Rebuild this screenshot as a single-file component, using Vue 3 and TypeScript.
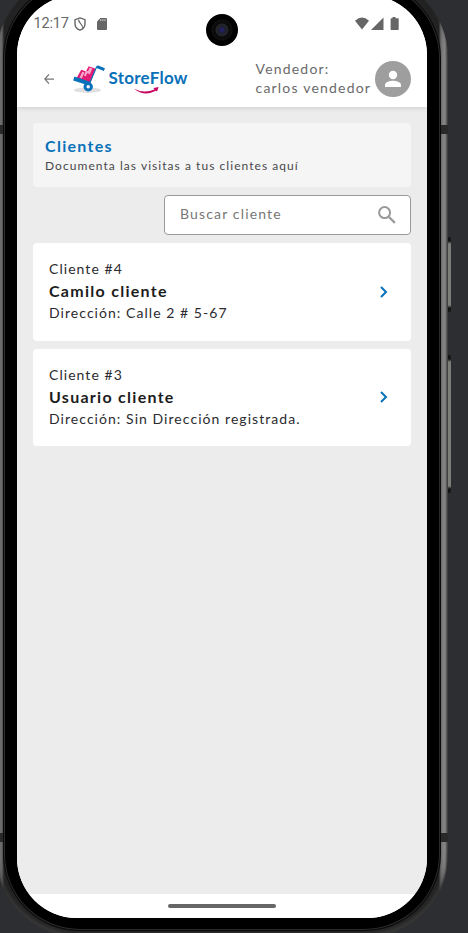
<script setup lang="ts">
interface Client {
  id: number
  name: string
  address: string
}

const seller = 'carlos vendedor'
const clients: Client[] = [
  { id: 4, name: 'Camilo cliente', address: 'Calle 2 # 5-67' },
  { id: 3, name: 'Usuario cliente', address: 'Sin Dirección registrada.' },
]
</script>

<template>
  <div class="stage">
    <span class="side-key power"></span>
    <span class="side-key volume"></span>
    <div class="phone">
      <span class="band band-top"></span>
      <span class="band band-low"></span>
      <div class="bezel">
        <div class="screen">
          <div class="status">
            <span class="clock">12:17</span>
            <svg class="shield" width="12" height="14" viewBox="0 0 12 14" fill="none" stroke="#666" stroke-width="1.4">
              <path d="M6 .9 11 2.7V6.5C11 9.8 9 12.2 6 13.2 3 12.2 1 9.8 1 6.5V2.7Z" />
              <path d="M4.6 2.5C4.4 6.2 8.6 6.4 8.7 10.8" stroke-width="1.2" />
            </svg>
            <svg class="sd" width="10" height="12" viewBox="0 0 10 12">
              <path d="M3.4 0H9q1 0 1 1v10q0 1-1 1H1q-1 0-1-1V3.5Z" fill="#666" />
              <path d="M3.8 1.2v1.8M5.9 1.2v1.8M8 1.2v1.8" stroke="#ddd" stroke-width=".9" />
            </svg>
            <svg class="signals" width="44" height="14" viewBox="0 0 44 14" fill="#666">
              <path d="M0 3.7Q7-2.5 14 3.7L7 12.5Z" />
              <path d="M28.5.5V13H16Z" />
              <path d="M37.5 0h3v1.2H43q.7 0 .7.8v10.2q0 .8-.7.8h-6.6q-.8 0-.8-.8V2q0-.8.8-.8h1.1Z" />
            </svg>
          </div>

          <header class="appbar">
            <svg class="back" width="10" height="10" viewBox="0 0 10 10" fill="none" stroke="#777" stroke-width="1.25">
              <path d="M10 5H.9M5 .4.8 5 5 9.6" />
            </svg>
            <div class="brand">
              <svg class="cart" width="33" height="29" viewBox="0 0 33 29">
                <ellipse cx="14.5" cy="25.2" rx="13.5" ry="2.7" fill="#e0e0e0" />
                <path d="m8.2 4.7 5 1.7-3.7 9-6-2.1Z" fill="#e31b76" />
                <path d="m15.7 1.3 7 2.5-5.2 14-9-3.2Z" fill="#e31b76" />
                <path d="m9.2 6.8 2.2.7-2.6 6-2.2-.7ZM16.6 2.6l2.8 1-2.5 5.6-2.7-.9ZM13 5.5l2 .7-2.2 5-1.9-.6Z" fill="#f6a5ca" />
                <path d="m16.5 18.5 7.4-17.2" fill="none" stroke="#0871b9" stroke-width="1.1" />
                <path d="m.8 13.5 15.6 5.2" stroke="#0871b9" stroke-width="4" />
                <path d="m24 1.6 7.4 3" stroke="#0871b9" stroke-width="3" />
                <circle cx="15.2" cy="21.8" r="3.2" fill="#fff" stroke="#0871b9" stroke-width="3" />
              </svg>
              <div class="wordmark">
                <span>StoreFlow</span>
                <svg class="swoosh" width="25" height="7" viewBox="0 0 25 7">
                  <path d="M0 1.8Q10 7 20.5 2.6L19.5 1l5.2-1L23 4.6l-1.1-.8Q10 10 0 1.8Z" fill="#c80862" />
                </svg>
              </div>
            </div>
            <div class="seller">
              <div>Vendedor:</div>
              <div>{{ seller }}</div>
            </div>
            <svg class="avatar" width="36" height="36" viewBox="0 0 36 36">
              <circle cx="18" cy="18" r="18" fill="#9e9e9e" />
              <circle cx="18" cy="14" r="4.2" fill="#fff" />
              <path d="M10 26v-2.2c0-2.7 5.3-4 8-4s8 1.3 8 4V26Z" fill="#fff" />
            </svg>
          </header>

          <main class="content">
            <section class="intro">
              <h1>Clientes</h1>
              <p>Documenta las visitas a tus clientes aquí</p>
            </section>
            <div class="search">
              <span>Buscar cliente</span>
              <svg width="18" height="18" viewBox="0 0 18 18" fill="none" stroke="#999" stroke-width="2">
                <circle cx="6.6" cy="6.6" r="5.5" />
                <path d="m10.7 10.7 6.2 6.2" stroke-width="2.2" />
              </svg>
            </div>
            <article v-for="client in clients" :key="client.id" class="card">
              <div class="details">
                <div class="number">Cliente #{{ client.id }}</div>
                <div class="name">{{ client.name }}</div>
                <div class="address">Dirección: {{ client.address }}</div>
              </div>
              <svg width="8" height="12" viewBox="0 0 8 12" fill="none" stroke="#0871b9" stroke-width="2">
                <path d="m1 1 5 5-5 5" />
              </svg>
            </article>
          </main>
          <footer class="navbar"><span></span></footer>
          <span class="camera"></span>
        </div>
      </div>
    </div>
  </div>
</template>

<style>
body {
  background: #2d2e32;
}
</style>

<style scoped>
.stage {
  position: relative;
  width: 468px;
  height: 933px;
  overflow: hidden;
  background: #2d2e32;
  font-family: Lato, "Noto Sans", sans-serif;
  color: #2b2b2f;
}
.stage * {
  box-sizing: border-box;
}
.phone {
  position: relative;
  width: 452px;
  height: 964px;
  margin: -26px 0 0 -4px;
  padding: 8px;
  border-radius: 84px;
  background: linear-gradient(90deg, #444 0, #707070 4px, #666 6px, #222 8px, #222 443px, #555 444px, #777 446px, #8c8c8c 449px, #5b5b5b 451px, #333 452px);
  box-shadow: inset 0 -1px 1px #303030, inset 0 -4px 4px #3c3c3c;
}
.bezel {
  position: relative;
  height: 948px;
  padding: 13px;
  border-radius: 76px;
  background: #000;
  box-shadow: inset 0 0 0 1px #2c2c2c, 0 0 0 1px #0a0a0a;
}
.screen {
  position: relative;
  display: flex;
  flex-direction: column;
  width: 410px;
  height: 923px;
  border-radius: 60px;
  overflow: hidden;
  background: #fff;
}
.side-key {
  position: absolute;
  left: 447px;
  width: 4px;
  border-radius: 0 2px 2px 0;
  background: linear-gradient(#141414 0, #141414 4px, #7c7c79 7px, #7c7c79 calc(100% - 7px), #141414 calc(100% - 4px));
}
.power {
  top: 237px;
  height: 75px;
}
.volume {
  top: 355px;
  height: 138px;
}
.band {
  position: absolute;
  left: 0;
  width: 452px;
  height: 9px;
  background: #292929;
}
.band-top {
  top: 151px;
}
.band-low {
  top: 859px;
}
.status {
  position: relative;
  z-index: 1;
  display: flex;
  align-items: center;
  flex: none;
  height: 56px;
  padding: 2px 28px 0 16.5px;
  font: 14.5px/20px Roboto, sans-serif;
  color: #666;
  background: #fff;
}
.clock {
  width: 36px;
  letter-spacing: -0.15px;
}
.shield {
  margin-left: 4px;
}
.sd {
  margin-left: 11px;
}
.signals {
  margin-left: auto;
}
.appbar {
  display: flex;
  align-items: center;
  flex: none;
  position: relative;
  height: 56px;
  padding: 0 16px 0 27px;
  background: #fff;
  box-shadow: 0 1px 5px #0002;
}
.brand {
  display: flex;
  margin-left: 19px;
  padding-top: 1px;
}
.wordmark {
  position: relative;
  margin-left: 2.5px;
  padding-top: 2px;
  font: 700 17px/22px Lato, sans-serif;
  color: #0871b9;
  letter-spacing: 0.25px;
}
.swoosh {
  position: absolute;
  left: 25px;
  top: 22px;
}
.seller {
  margin-left: auto;
  width: 119.5px;
  padding-bottom: 2px;
  font-size: 14px;
  line-height: 19px;
  letter-spacing: 1.2px;
  color: #6a6a6a;
  white-space: nowrap;
}
.avatar {
  flex: none;
}
.content {
  flex: 1;
  display: flex;
  flex-direction: column;
  gap: 8px;
  padding: 16px;
  background: #ececec;
}
.intro {
  height: 64px;
  padding: 12px;
  border-radius: 4px;
  background: #f5f5f5;
}
.intro h1 {
  margin: 0;
  font-size: 16px;
  line-height: 21px;
  letter-spacing: 1.3px;
  color: #0871b9;
}
.intro p {
  margin: 0;
  font-size: 12px;
  line-height: 20px;
  letter-spacing: 1.05px;
  color: #48484b;
  white-space: nowrap;
}
.search {
  align-self: flex-end;
  display: flex;
  align-items: center;
  justify-content: space-between;
  width: 247px;
  height: 40px;
  padding: 0 14px 1px 15px;
  border: 1px solid #999;
  border-radius: 4px;
  background: #fff;
  font-size: 14px;
  letter-spacing: 1.15px;
  color: #777;
}
.search span {
  padding-bottom: 2px;
}
.card {
  display: flex;
  align-items: center;
  justify-content: space-between;
  height: 97.6px;
  padding: 0 23.5px 0 16px;
  border-radius: 4px;
  background: #fff;
  white-space: nowrap;
}
.details {
  padding-bottom: 1px;
  line-height: 22.2px;
  font-size: 14px;
  letter-spacing: 1.05px;
}
.name {
  font-size: 16px;
  font-weight: 700;
  letter-spacing: 1.28px;
  color: #1c1c20;
}
.navbar {
  display: flex;
  justify-content: center;
  flex: none;
  height: 24px;
  padding-top: 10px;
  background: #fff;
}
.navbar span {
  width: 108px;
  height: 4px;
  border-radius: 2px;
  background: #666;
}
.camera {
  position: absolute;
  z-index: 2;
  left: 189px;
  top: 19px;
  width: 32px;
  height: 32px;
  border-radius: 50%;
  background: radial-gradient(circle, #242066 0 1.5px, #1c2030 3px, #252527 6px, #080808 7px, #101010 10px, #000 11px);
}
</style>
